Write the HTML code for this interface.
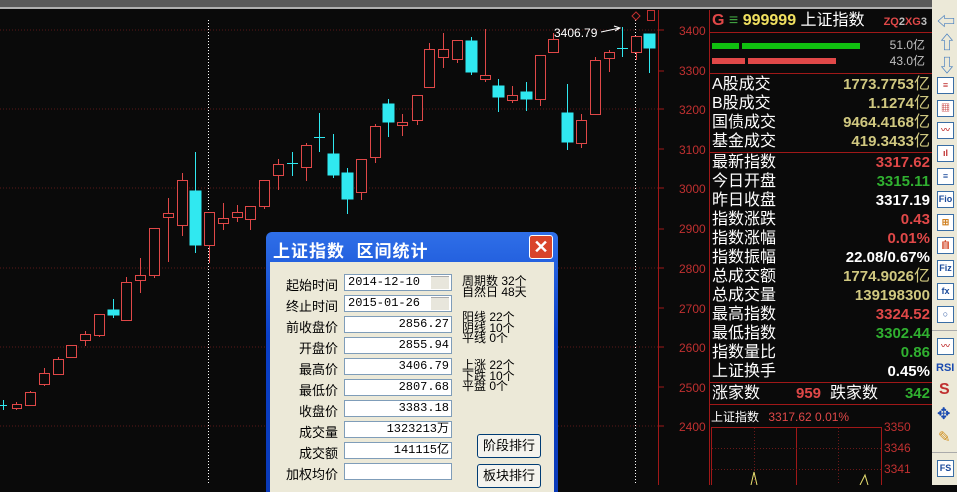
<!DOCTYPE html>
<html><head><meta charset="utf-8">
<style>
*{margin:0;padding:0;box-sizing:border-box}
body{width:957px;height:485px;background:#0a0a0a;overflow:hidden;position:relative;font-family:"Liberation Sans","Noto Sans CJK SC",sans-serif}
.abs{position:absolute}
.rp{position:absolute;left:712px;width:218px;font-size:16px;color:#fff;line-height:19px;white-space:nowrap}
.rp .v{position:absolute;right:0;top:0;font-weight:bold;font-size:15px}
.dlg{position:absolute;left:266px;top:232px;width:292px;height:260px;background:linear-gradient(#2f6fe8,#0a3fc8 40%,#0a3ab8);border-radius:6px 6px 0 0}
.dlg .body{position:absolute;left:4px;top:30px;width:284px;height:230px;background:#ece9d8}
.lbl{position:absolute;font-size:13px;color:#000;text-align:right;width:60px;left:8px}
.inp{position:absolute;left:74px;width:108px;height:17px;background:#fff;border:1px solid #7f9db9;font-size:12px;font-family:"Liberation Mono","Noto Sans CJK SC",monospace;text-align:right;padding-right:2px;line-height:15px;color:#000}
.rt{position:absolute;left:192px;font-size:12px;line-height:10.5px;color:#000}
.btn{position:absolute;left:207px;width:64px;height:24px;border:1px solid #003c74;border-radius:3px;background:#f4f3ee;font-size:13px;text-align:center;line-height:22px}
.tb{position:absolute;left:932px;top:0;width:25px;height:485px;background:#ece9d8}
.ic{position:absolute;left:5px;width:17px;height:17px;border:1px solid #3a6ea5;background:#fff;font-size:9px;color:#1a4a9a;text-align:center;line-height:15px;font-weight:bold}
</style></head><body>
<div class="abs" style="left:0;top:0;width:957px;height:9px;background:#5a5a5a;border-bottom:2px solid #b0b0b0"></div>
<svg class="abs" style="left:0;top:0" width="932" height="485">
<g stroke="#5a1818" stroke-dasharray="1,2">
<line x1="0" y1="30" x2="658" y2="30"/><line x1="0" y1="109" x2="658" y2="109"/><line x1="0" y1="188" x2="658" y2="188"/><line x1="0" y1="268" x2="658" y2="268"/><line x1="0" y1="347" x2="658" y2="347"/><line x1="0" y1="426" x2="658" y2="426"/>
</g>
<line x1="658.5" y1="10" x2="658.5" y2="485" stroke="#a01818"/>
<line x1="709.5" y1="10" x2="709.5" y2="485" stroke="#a01818"/>
<g stroke="#fff" stroke-dasharray="1,2"><line x1="208.5" y1="20" x2="208.5" y2="485"/><line x1="635.5" y1="20" x2="635.5" y2="485"/></g>
<g fill="#c03030" font-size="12" font-family="Liberation Sans">
<text x="679" y="35">3400</text><text x="679" y="75">3300</text><text x="679" y="114">3200</text><text x="679" y="154">3100</text><text x="679" y="193">3000</text><text x="679" y="233">2900</text><text x="679" y="273">2800</text><text x="679" y="313">2700</text><text x="679" y="352">2600</text><text x="679" y="392">2500</text><text x="679" y="431">2400</text>
</g>
<g stroke="#a01818"><line x1="658" y1="30" x2="664" y2="30"/><line x1="658" y1="71" x2="664" y2="71"/><line x1="658" y1="109" x2="664" y2="109"/><line x1="658" y1="149" x2="664" y2="149"/><line x1="658" y1="188" x2="664" y2="188"/><line x1="658" y1="229" x2="664" y2="229"/><line x1="658" y1="268" x2="664" y2="268"/><line x1="658" y1="308" x2="664" y2="308"/><line x1="658" y1="347" x2="664" y2="347"/><line x1="658" y1="387" x2="664" y2="387"/><line x1="658" y1="426" x2="664" y2="426"/></g>
<g stroke="#e04848" fill="#0a0a0a">
<line x1="16.5" y1="402" x2="16.5" y2="410"/><rect x="12.5" y="404.5" width="9" height="4"/>
<line x1="30.5" y1="391" x2="30.5" y2="406"/><rect x="25.5" y="392.5" width="10" height="13"/>
<line x1="44.5" y1="368" x2="44.5" y2="386"/><rect x="39.5" y="373.5" width="10" height="11"/>
<line x1="58.5" y1="357" x2="58.5" y2="375"/><rect x="53.5" y="359.5" width="10" height="15"/>
<rect x="66.5" y="345.5" width="10" height="12"/>
<line x1="85.5" y1="331" x2="85.5" y2="346"/><rect x="80.5" y="334.5" width="10" height="6"/>
<line x1="99.5" y1="314" x2="99.5" y2="337"/><rect x="94.5" y="314.5" width="10" height="21"/>
<line x1="126.5" y1="277" x2="126.5" y2="320"/><rect x="121.5" y="282.5" width="10" height="38"/>
<line x1="140.5" y1="258" x2="140.5" y2="293"/><rect x="135.5" y="275.5" width="10" height="5"/>
<line x1="154.5" y1="228" x2="154.5" y2="278"/><rect x="149.5" y="228.5" width="10" height="47"/>
<line x1="168.5" y1="198" x2="168.5" y2="262"/><rect x="163.5" y="213.5" width="10" height="4"/>
<line x1="182.5" y1="173" x2="182.5" y2="236"/><rect x="177.5" y="180.5" width="10" height="45"/>
<line x1="209.5" y1="212" x2="209.5" y2="263"/><rect x="204.5" y="212.5" width="10" height="33"/>
<line x1="223.5" y1="203" x2="223.5" y2="230"/><rect x="218.5" y="218.5" width="10" height="5"/>
<line x1="237.5" y1="205" x2="237.5" y2="222"/><rect x="232.5" y="212.5" width="10" height="5"/>
<line x1="250.5" y1="206" x2="250.5" y2="230"/><rect x="245.5" y="206.5" width="10" height="13"/>
<line x1="264.5" y1="180" x2="264.5" y2="209"/><rect x="259.5" y="180.5" width="10" height="26"/>
<line x1="278.5" y1="159" x2="278.5" y2="190"/><rect x="273.5" y="164.5" width="10" height="11"/>
<line x1="306.5" y1="143" x2="306.5" y2="181"/><rect x="301.5" y="145.5" width="10" height="22"/>
<line x1="361.5" y1="159" x2="361.5" y2="200"/><rect x="356.5" y="159.5" width="10" height="33"/>
<line x1="375.5" y1="124" x2="375.5" y2="163"/><rect x="370.5" y="126.5" width="10" height="31"/>
<line x1="402.5" y1="114" x2="402.5" y2="136"/><rect x="397.5" y="122.5" width="10" height="3"/>
<line x1="417.5" y1="95" x2="417.5" y2="125"/><rect x="412.5" y="95.5" width="10" height="25"/>
<line x1="429.5" y1="43" x2="429.5" y2="87"/><rect x="424.5" y="49.5" width="10" height="38"/>
<line x1="443.5" y1="33" x2="443.5" y2="68"/><rect x="438.5" y="49.5" width="10" height="8"/>
<line x1="457.5" y1="40" x2="457.5" y2="63"/><rect x="452.5" y="40.5" width="10" height="19"/>
<line x1="485.5" y1="29" x2="485.5" y2="82"/><rect x="480.5" y="75.5" width="10" height="4"/>
<line x1="512.5" y1="86" x2="512.5" y2="103"/><rect x="507.5" y="95.5" width="10" height="5"/>
<line x1="540.5" y1="55" x2="540.5" y2="106"/><rect x="535.5" y="55.5" width="10" height="44"/>
<line x1="553.5" y1="33" x2="553.5" y2="52"/><rect x="548.5" y="39.5" width="10" height="13"/>
<line x1="581.5" y1="114" x2="581.5" y2="148"/><rect x="576.5" y="120.5" width="10" height="23"/>
<line x1="595.5" y1="57" x2="595.5" y2="114"/><rect x="590.5" y="60.5" width="10" height="54"/>
<line x1="609.5" y1="50" x2="609.5" y2="72"/><rect x="604.5" y="52.5" width="10" height="6"/>
<line x1="636.5" y1="36" x2="636.5" y2="60"/><rect x="631.5" y="36.5" width="10" height="16"/>
</g>
<g stroke="#30e8f0" fill="#30e8f0">
<line x1="3.5" y1="400" x2="3.5" y2="410"/><line x1="0" y1="405.5" x2="7" y2="405.5"/>
<line x1="113.5" y1="299" x2="113.5" y2="318"/><rect x="108" y="310" width="11" height="5"/>
<line x1="195.5" y1="152" x2="195.5" y2="253"/><rect x="190" y="191" width="11" height="54"/>
<line x1="292.5" y1="152" x2="292.5" y2="176"/><line x1="287" y1="163.5" x2="298" y2="163.5"/>
<line x1="319.5" y1="113" x2="319.5" y2="152"/><line x1="314" y1="137.5" x2="325" y2="137.5"/>
<line x1="333.5" y1="134" x2="333.5" y2="178"/><rect x="328" y="154" width="11" height="21"/>
<line x1="347.5" y1="168" x2="347.5" y2="214"/><rect x="342" y="173" width="11" height="26"/>
<line x1="388.5" y1="99" x2="388.5" y2="137"/><rect x="383" y="104" width="11" height="18"/>
<line x1="471.5" y1="37" x2="471.5" y2="75"/><rect x="466" y="41" width="11" height="31"/>
<line x1="498.5" y1="79" x2="498.5" y2="112"/><rect x="493" y="86" width="11" height="11"/>
<line x1="526.5" y1="82" x2="526.5" y2="111"/><rect x="521" y="92" width="11" height="7"/>
<line x1="567.5" y1="84" x2="567.5" y2="150"/><rect x="562" y="113" width="11" height="29"/>
<line x1="622.5" y1="27" x2="622.5" y2="57"/><line x1="617" y1="48.5" x2="628" y2="48.5"/>
<line x1="649.5" y1="34" x2="649.5" y2="73"/><rect x="644" y="34" width="11" height="14"/>
</g>
<text x="554" y="37" fill="#fff" font-size="12" font-family="Liberation Sans">3406.79</text>
<path d="M601 32 L620 28 M614 26 L620 28 L615 31" stroke="#fff" fill="none"/>
<path d="M636 12 L640 16 L636 20 L632 16 Z" stroke="#c03030" fill="none"/>
<rect x="647.5" y="10.5" width="7" height="10" stroke="#c03030" fill="none"/>
<g stroke="#a01818"><line x1="710" y1="32.5" x2="932" y2="32.5"/><line x1="710" y1="73.5" x2="932" y2="73.5"/><line x1="710" y1="152.5" x2="932" y2="152.5"/><line x1="710" y1="382.5" x2="932" y2="382.5"/><line x1="710" y1="404.5" x2="932" y2="404.5"/></g>
<rect x="712" y="43" width="27" height="6" fill="#10c010"/><rect x="742" y="43" width="118" height="6" fill="#10c010"/>
<rect x="712" y="58" width="33" height="6" fill="#e04848"/><rect x="748" y="58" width="88" height="6" fill="#e04848"/>
<rect x="711.5" y="427.5" width="170" height="60" stroke="#a01818" fill="none"/>
<line x1="796.5" y1="427" x2="796.5" y2="485" stroke="#a01818"/>
<g stroke="#6a1818" stroke-dasharray="1,2"><line x1="712" y1="448.5" x2="881" y2="448.5"/><line x1="712" y1="469.5" x2="881" y2="469.5"/><line x1="754.5" y1="428" x2="754.5" y2="485"/><line x1="838.5" y1="428" x2="838.5" y2="485"/></g>
<path d="M751 485 L754 472 L757 485 M860 485 L865 475 L868 485" stroke="#e8e070" fill="none"/>
<g fill="#c03030" font-size="12" font-family="Liberation Sans"><text x="884" y="431">3350</text><text x="884" y="452">3346</text><text x="884" y="473">3341</text></g>
</svg>

<div class="rp" style="top:11px;font-size:16px;font-weight:bold"><span style="color:#e04848">G</span> <span style="color:#40a040;font-weight:normal">≡</span> <span style="color:#f0e060">999999</span> <span style="font-weight:normal">上证指数</span><span style="position:absolute;right:3px;top:2px;font-size:11px;color:#e04848">ZQ<span style="color:#c0c0c0">2</span>XG<span style="color:#c0c0c0">3</span></span></div>
<div class="rp" style="top:37px;font-size:12px;color:#c0c0c0;line-height:16px"><div style="text-align:right;padding-right:5px">51.0亿</div><div style="text-align:right;padding-right:5px">43.0亿</div></div>
<div class="rp" style="top:75px;color:#d8d080">
<div style="position:relative;color:#fff">A股成交<span class="v" style="color:#d0c880">1773.7753<span style="font-weight:normal;font-size:16px">亿</span></span></div>
<div style="position:relative;color:#fff">B股成交<span class="v" style="color:#d0c880">1.1274<span style="font-weight:normal;font-size:16px">亿</span></span></div>
<div style="position:relative;color:#fff">国债成交<span class="v" style="color:#d0c880">9464.4168<span style="font-weight:normal;font-size:16px">亿</span></span></div>
<div style="position:relative;color:#fff">基金成交<span class="v" style="color:#d0c880">419.3433<span style="font-weight:normal;font-size:16px">亿</span></span></div>
</div>
<div class="rp" style="top:153px">
<div style="position:relative">最新指数<span class="v" style="color:#e04848">3317.62</span></div>
<div style="position:relative">今日开盘<span class="v" style="color:#30b030">3315.11</span></div>
<div style="position:relative">昨日收盘<span class="v" style="color:#fff">3317.19</span></div>
<div style="position:relative">指数涨跌<span class="v" style="color:#e04848">0.43</span></div>
<div style="position:relative">指数涨幅<span class="v" style="color:#e04848">0.01%</span></div>
<div style="position:relative">指数振幅<span class="v" style="color:#fff">22.08/0.67%</span></div>
<div style="position:relative">总成交额<span class="v" style="color:#d0c880">1774.9026<span style="font-weight:normal;font-size:16px">亿</span></span></div>
<div style="position:relative">总成交量<span class="v" style="color:#d0c880">139198300</span></div>
<div style="position:relative">最高指数<span class="v" style="color:#e04848">3324.52</span></div>
<div style="position:relative">最低指数<span class="v" style="color:#30b030">3302.44</span></div>
<div style="position:relative">指数量比<span class="v" style="color:#30b030">0.86</span></div>
<div style="position:relative">上证换手<span class="v" style="color:#fff">0.45%</span></div>
</div>
<div class="rp" style="top:384px"><div style="position:relative">涨家数<span style="position:absolute;left:84px;font-weight:bold;font-size:15px;color:#e04848">959</span><span style="position:absolute;left:118px">跌家数</span><span class="v" style="color:#30b030">342</span></div></div>
<div class="abs" style="left:711px;top:408px;font-size:12px;color:#fff;white-space:nowrap">上证指数 <span style="color:#e04848;margin-left:6px">3317.62 0.01%</span></div>

<div class="dlg">
<div class="abs" style="left:7px;top:5px;color:#fff;font-size:17px;font-weight:bold;letter-spacing:1px;white-space:nowrap">上证指数&nbsp; 区间统计</div>
<div class="abs" style="left:263px;top:3px;width:24px;height:24px;background:#d9442a;border:1px solid #fff;border-radius:3px;color:#fff;font-size:18px;font-weight:bold;text-align:center;line-height:22px">✕</div>
<div class="body">
<div class="lbl" style="top:13px">起始时间</div><div class="inp" style="top:12px;text-align:left;padding-left:3px;background:#fff">2014-12-10<span style="position:absolute;right:2px;top:1px;width:18px;height:13px;background:#e8e6dc;border-top:1px solid #aaa"></span></div>
<div class="lbl" style="top:34px">终止时间</div><div class="inp" style="top:33px;text-align:left;padding-left:3px">2015-01-26<span style="position:absolute;right:2px;top:1px;width:18px;height:13px;background:#e8e6dc;border-top:1px solid #aaa"></span></div>
<div class="lbl" style="top:55px">前收盘价</div><div class="inp" style="top:54px">2856.27</div>
<div class="lbl" style="top:76px">开盘价</div><div class="inp" style="top:75px">2855.94</div>
<div class="lbl" style="top:97px">最高价</div><div class="inp" style="top:96px">3406.79</div>
<div class="lbl" style="top:118px">最低价</div><div class="inp" style="top:117px">2807.68</div>
<div class="lbl" style="top:139px">收盘价</div><div class="inp" style="top:138px">3383.18</div>
<div class="lbl" style="top:160px">成交量</div><div class="inp" style="top:159px">1323213万</div>
<div class="lbl" style="top:181px">成交额</div><div class="inp" style="top:180px">141115亿</div>
<div class="lbl" style="top:202px">加权均价</div><div class="inp" style="top:201px"></div>
<div class="rt" style="top:14px">周期数 32个<br>自然日 48天</div>
<div class="rt" style="top:50px">阳线 22个<br>阴线 10个<br>平线 0个</div>
<div class="rt" style="top:98px">上涨 22个<br>下跌 10个<br>平盘 0个</div>
<div class="btn" style="top:172px">阶段排行</div>
<div class="btn" style="top:202px">板块排行</div>
</div>
</div>

<div class="tb">
<div class="abs" style="left:5px;top:8px;font-size:18px;color:#4a80c0">⇦</div>
<div class="abs" style="left:6px;top:29px;font-size:18px;color:#4a80c0">⇧</div>
<div class="abs" style="left:6px;top:52px;font-size:18px;color:#4a80c0">⇩</div>
<div class="ic" style="top:77px;color:#c03030">≡</div>
<div class="ic" style="top:100px;color:#c03030">▦</div>
<div class="ic" style="top:122px;color:#c03030">〰</div>
<div class="ic" style="top:145px;color:#c03030">ıl</div>
<div class="ic" style="top:168px">≡</div>
<div class="ic" style="top:191px">Fio</div>
<div class="ic" style="top:214px;color:#d08020">⊞</div>
<div class="ic" style="top:237px;color:#d04020">自</div>
<div class="ic" style="top:260px">Fiz</div>
<div class="ic" style="top:283px">fx</div>
<div class="ic" style="top:306px">○</div>
<div class="abs" style="left:0;top:330px;width:25px;border-top:1px solid #aaa"></div>
<div class="ic" style="top:338px;color:#c03030">〰</div>
<div class="abs" style="left:4px;top:362px;font-size:11px;font-weight:bold;color:#1a4ab0">RSI</div>
<div class="abs" style="left:7px;top:381px;font-size:16px;font-weight:bold;color:#c03030">S</div>
<div class="abs" style="left:5px;top:404px;font-size:16px;color:#1a4ab0">✥</div>
<div class="abs" style="left:6px;top:428px;font-size:15px;color:#d09020">✎</div>
<div class="abs" style="left:0;top:452px;width:25px;border-top:1px solid #aaa"></div>
<div class="ic" style="top:460px">FS</div>
</div>
</body></html>
